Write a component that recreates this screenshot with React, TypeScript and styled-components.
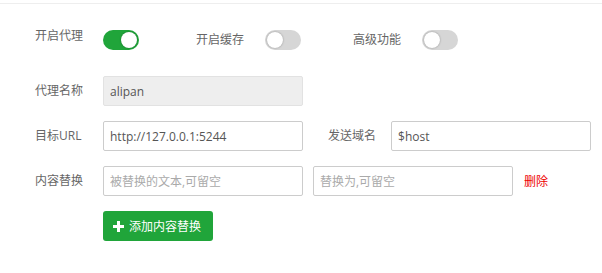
import { createGlobalStyle, styled } from 'styled-components';

const GlobalStyle = createGlobalStyle`
  html, body { margin: 0; padding: 0; background: #fff; }
  body {
    font-family: "Open Sans", "Noto Sans CJK SC", sans-serif;
    font-size: 12px;
    color: #555;
  }
`;

const Page = styled.div`
  width: 602px;
  height: 273px;
  overflow: hidden;
`;

const TopLine = styled.div`
  margin-top: 3px;
  height: 1px;
  background: #eee;
`;

const Form = styled.div`
  display: flex;
  flex-direction: column;
  gap: 15px;
  padding: 26px 0 0 35px;
`;

// the switch row is shorter and stands a bit apart from the inputs
const Row = styled.div<{ $switches?: boolean }>`
  display: flex;
  align-items: center;
  height: ${p => (p.$switches ? '20px' : 'auto')};
  margin-bottom: ${p => (p.$switches ? '11px' : '0')};
`;

const Label = styled.span<{ $width?: number; $gap?: number; $lead?: number; $high?: boolean }>`
  width: ${p => (p.$width ? `${p.$width}px` : 'auto')};
  margin-left: ${p => p.$lead ?? 0}px;
  margin-right: ${p => p.$gap ?? 0}px;
  line-height: 12px;
  font-size: 12px;
  color: #666;
  white-space: nowrap;
  align-self: ${p => (p.$high ? 'flex-start' : 'center')};
`;

const Switch = styled.span<{ $on?: boolean }>`
  position: relative;
  display: inline-block;
  width: 36px;
  height: 20px;
  border-radius: 10px;
  background: ${p => (p.$on ? '#20a53a' : '#d6d6d6')};
  box-sizing: border-box;
  &::after {
    content: '';
    position: absolute;
    top: 2px;
    left: ${p => (p.$on ? '18px' : '2px')};
    width: 16px;
    height: 16px;
    border-radius: 50%;
    background: #fff;
    box-shadow: 0 0 2px rgba(0, 0, 0, 0.35);
  }
`;

const Input = styled.input<{ $lead?: number }>`
  width: 200px;
  height: 30px;
  box-sizing: border-box;
  margin-left: ${p => p.$lead ?? 0}px;
  padding: 0 6px;
  border: 1px solid #ccc;
  border-radius: 2px;
  font-family: "Open Sans", "Noto Sans CJK SC", sans-serif;
  font-size: 12px;
  color: #555;
  background: #fff;
  outline: none;
  &:disabled {
    background: #eee;
    border-color: #e2e2e2;
  }
  &::placeholder {
    color: #aaa;
  }
`;

const DeleteLink = styled.a`
  margin-left: 11px;
  color: #e00;
  font-size: 12px;
  cursor: pointer;
`;

const AddButton = styled.button`
  display: inline-flex;
  align-items: center;
  gap: 5px;
  margin-left: 68px;
  width: 110px;
  height: 30px;
  padding: 0 0 0 10px;
  border: none;
  border-radius: 3px;
  background: #20a53a;
  color: #fff;
  font-family: "Open Sans", "Noto Sans CJK SC", sans-serif;
  font-size: 12px;
  cursor: pointer;
`;

const PlusIcon = () => (
  <svg width="11" height="11" viewBox="0 0 11 11">
    <path d="M4 0h3v4h4v3H7v4H4V7H0V4h4z" fill="#fff" />
  </svg>
);

export default function App() {
  return (
    <Page>
      <GlobalStyle />
      <TopLine />
      <Form>
        <Row $switches>
          <Label $width={68} $high>开启代理</Label>
          <Switch $on />
          <Label $lead={57} $gap={21}>开启缓存</Label>
          <Switch />
          <Label $lead={52} $gap={21}>高级功能</Label>
          <Switch />
        </Row>
        <Row>
          <Label $width={68}>代理名称</Label>
          <Input disabled value="alipan" readOnly />
        </Row>
        <Row>
          <Label $width={68}>目标URL</Label>
          <Input defaultValue="http://127.0.0.1:5244" />
          <Label $lead={25} $gap={15}>发送域名</Label>
          <Input defaultValue="$host" />
        </Row>
        <Row>
          <Label $width={68}>内容替换</Label>
          <Input placeholder="被替换的文本,可留空" />
          <Input $lead={10} placeholder="替换为,可留空" />
          <DeleteLink>删除</DeleteLink>
        </Row>
        <Row>
          <AddButton>
            <PlusIcon />
            添加内容替换
          </AddButton>
        </Row>
      </Form>
    </Page>
  );
}
